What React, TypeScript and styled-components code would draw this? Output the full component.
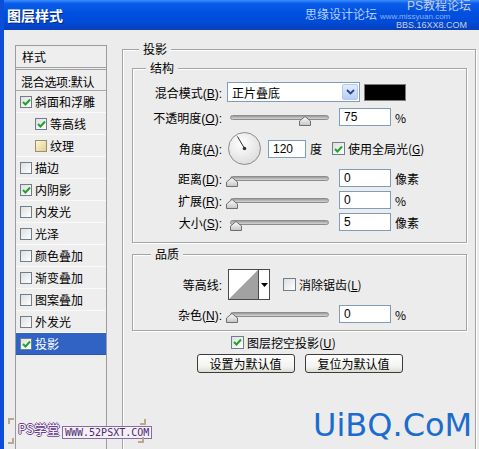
import styled, { createGlobalStyle } from "styled-components"

const GlobalStyle = createGlobalStyle`
  body {
    margin: 0;
    background: #ececec;
    font-family: "Liberation Sans", "Noto Sans CJK SC", sans-serif;
    font-size: 12px;
    color: #000;
  }
  * { box-sizing: border-box; }
`

const Window = styled.div`
  position: relative;
  width: 479px;
  height: 449px;
  overflow: hidden;
  background: #ececec;
  border-left: 4px solid #0b4ed8;
`

const TitleBar = styled.div`
  position: relative;
  height: 30px;
  display: flex;
  align-items: center;
  padding-left: 3px;
  background: linear-gradient(#3b8cff 0%, #0a5ce8 12%, #0050e0 45%, #0049d4 80%, #0a3fb8 100%);
`

const Title = styled.span`
  color: #fff;
  font-family: "Noto Sans CJK SC", sans-serif;
  font-weight: 700;
  font-size: 14px;
  text-shadow: 1px 1px 0 #0a2a80;
`

const Mark = styled.span<{ $x: number; $y: number; $size: number; $color: string }>`
  position: absolute;
  left: ${p => p.$x}px;
  top: ${p => p.$y}px;
  font-size: ${p => p.$size}px;
  color: ${p => p.$color};
  line-height: 1;
  white-space: nowrap;
`

const Body = styled.div`
  display: flex;
  align-items: flex-start;
  gap: 15px;
  padding: 15px 0 0 11px;
`

const StylePanel = styled.div`
  width: 92px;
  height: 420px;
  border: 1px solid #9c9c9c;
  background: #eeeeee;
`

const PanelHead = styled.div`
  height: 24px;
  padding: 2px 0 0 6px;
  border-bottom: 3px double #a0a0a0;
`

const BlendRow = styled.div`
  height: 21px;
  padding: 3px 0 0 5px;
  border-bottom: 1px solid #a8a8a8;
  white-space: nowrap;
  letter-spacing: -0.3px;
`

const ListRow = styled.div<{ $indent?: boolean; $selected?: boolean }>`
  height: 22px;
  display: flex;
  align-items: center;
  gap: 3px;
  padding-left: ${p => (p.$indent ? 19 : 4)}px;
  border-bottom: 1px solid ${p => (p.$selected ? "#2a58b0" : "#fafafa")};
  background: ${p => (p.$selected ? "#3163c4" : "transparent")};
  color: ${p => (p.$selected ? "#fff" : "#000")};
  font-family: "Noto Sans CJK SC", sans-serif;
`

const Box = styled.span<{ $size: number; $texture?: boolean }>`
  display: inline-flex;
  align-items: center;
  justify-content: center;
  width: ${p => p.$size}px;
  height: ${p => p.$size}px;
  flex: none;
  border: 1px solid ${p => (p.$texture ? "#9a9070" : "#6e7e8c")};
  background: ${p =>
    p.$texture
      ? "linear-gradient(135deg, #fff6d8, #e6cf8c)"
      : "linear-gradient(135deg, #dedede, #ffffff)"};
`

const Group = styled.div<{ $gap?: number }>`
  position: relative;
  border: 1px solid #a4a4a4;
  box-shadow: inset 1px 1px 0 #fff, 1px 1px 0 #fff;
  margin-top: ${p => p.$gap ?? 0}px;
`

const Legend = styled.span<{ $left: number }>`
  position: absolute;
  top: -9px;
  left: ${p => p.$left}px;
  padding: 0 4px;
  background: #ececec;
  font-family: "Noto Sans CJK SC", sans-serif;
  line-height: 16px;
`

const Outer = styled(Group)`
  width: 354px;
  height: 420px;
  margin-top: 4px;
  padding: 18px 8px 0 9px;
`

const Section = styled(Group)<{ $pad: string }>`
  display: flex;
  flex-direction: column;
  gap: 4px;
  padding: ${p => p.$pad};
`

const Row = styled.div<{ $h: number; $mt?: number; $ml?: number }>`
  display: flex;
  align-items: center;
  height: ${p => p.$h}px;
  margin-top: ${p => p.$mt ?? 0}px;
  margin-left: ${p => p.$ml ?? 0}px;
  white-space: nowrap;
`

const Label = styled.span`
  width: 90px;
  padding-right: 1px;
  text-align: right;
  margin-right: 4px;
  flex: none;
`

const Select = styled.div`
  width: 133px;
  height: 20px;
  display: flex;
  align-items: center;
  justify-content: space-between;
  border: 1px solid #7f9db9;
  background: #fff;
  padding: 1px 1px 1px 4px;
`

const DropButton = styled.span`
  width: 16px;
  height: 16px;
  display: flex;
  align-items: center;
  justify-content: center;
  border: 1px solid #b4c8ee;
  border-radius: 2px;
  background: linear-gradient(#e4ecfd, #b9cdf6);
`

const Swatch = styled.span`
  width: 42px;
  height: 17px;
  margin-left: 4px;
  background: #000;
  border: 1px solid #7a7a7a;
`

const SliderWrap = styled.div`
  position: relative;
  width: 104px;
  height: 18px;
  padding: 0 2px 0 3px;
  display: flex;
  align-items: center;
`

const Track = styled.div`
  width: 100%;
  height: 5px;
  border-radius: 3px;
  border: 1px solid #8c8c8c;
  background: linear-gradient(#9a9a9a, #d6d6d6);
`

const Thumb = styled.svg`
  position: absolute;
  top: 8px;
`

const Field = styled.div<{ $w: number; $ml: number }>`
  width: ${p => p.$w}px;
  height: 18px;
  margin-left: ${p => p.$ml}px;
  border: 1px solid #7f9db9;
  background: #fff;
  padding: 1px 0 0 4px;
  line-height: 15px;
`

const Unit = styled.span`
  margin-left: 4px;
  font-family: "Noto Sans CJK SC", sans-serif;
`

const Dial = styled.svg`
  margin-left: 1px;
  flex: none;
`

const Contour = styled.div`
  display: flex;
  height: 31px;
  margin-left: 1px;
  border: 1px solid #4a4a4a;
  background: #fff;
`

const ContourArrow = styled.span`
  width: 11px;
  display: flex;
  align-items: center;
  justify-content: center;
  border-left: 1px solid #4a4a4a;
`

const CheckText = styled.span`
  margin-left: 3px;
  font-family: "Noto Sans CJK SC", sans-serif;
`

const ButtonRow = styled.div`
  display: flex;
  justify-content: center;
  gap: 10px;
  margin-top: 3px;
`

const Button = styled.button`
  width: 98px;
  height: 19px;
  padding: 0;
  border: 1px solid #3c3c3c;
  border-radius: 3px;
  background: linear-gradient(#ffffff, #f2f2ee 70%, #dcdcd4);
  font-family: "Noto Sans CJK SC", sans-serif;
  font-size: 12px;
  line-height: 16px;
  color: #000;
`

const Bracket = styled.span<{ $x: number; $y: number; $flip?: boolean }>`
  position: absolute;
  left: ${p => p.$x}px;
  top: ${p => p.$y}px;
  width: 6px;
  height: 6px;
  border: 2px solid #b8a890;
  border-right: none;
  border-bottom: none;
  transform: ${p => (p.$flip ? "rotate(180deg)" : "none")};
`

const PsMark = styled.span`
  position: absolute;
  left: 14px;
  top: 422px;
  font-family: "Noto Sans CJK SC", sans-serif;
  font-size: 13px;
  line-height: 1;
  color: #fff;
  text-shadow: 1px 0 0 #6b3f8e, -1px 0 0 #6b3f8e, 0 1px 0 #6b3f8e, 0 -1px 0 #6b3f8e;
`

const SiteMark = styled.span`
  position: absolute;
  left: 58px;
  top: 426px;
  padding: 0 2px;
  font-family: "DejaVu Sans Mono", monospace;
  font-size: 10px;
  line-height: 11px;
  color: #4a2a6a;
  background: #f4f0f8;
  border: 1px solid #8a6aa0;
`

const BigMark = styled.span`
  position: absolute;
  left: 309px;
  top: 409px;
  font-family: "DejaVu Sans", sans-serif;
  font-size: 32px;
  line-height: 32px;
  color: #1c6cd0;
`

function Check({ checked, texture, size = 12 }: { checked?: boolean; texture?: boolean; size?: number }) {
  return (
    <Box $size={size} $texture={texture}>
      {checked && (
        <svg width="9" height="8" viewBox="0 0 9 8">
          <path d="M1 4 L3.5 6.5 L8 1.5" stroke="#22a32a" strokeWidth="2" fill="none" />
        </svg>
      )}
    </Box>
  )
}

function Slider({ pos }: { pos: number }) {
  return (
    <SliderWrap>
      <Track />
      <Thumb width="12" height="10" viewBox="0 0 12 10" style={{ left: pos - 6 }}>
        <defs>
          <linearGradient id="thumbFill" x1="0" y1="0" x2="0" y2="1">
            <stop offset="0" stopColor="#ffffff" />
            <stop offset="1" stopColor="#c4c4c4" />
          </linearGradient>
        </defs>
        <polygon points="6,0.5 11.5,5 11.5,9.5 0.5,9.5 0.5,5" fill="url(#thumbFill)" stroke="#6e6e6e" />
      </Thumb>
    </SliderWrap>
  )
}

const styles: { name: string; checked?: boolean; indent?: boolean; texture?: boolean; selected?: boolean }[] = [
  { name: "斜面和浮雕", checked: true },
  { name: "等高线", checked: true, indent: true },
  { name: "纹理", indent: true, texture: true },
  { name: "描边" },
  { name: "内阴影", checked: true },
  { name: "内发光" },
  { name: "光泽" },
  { name: "颜色叠加" },
  { name: "渐变叠加" },
  { name: "图案叠加" },
  { name: "外发光" },
  { name: "投影", checked: true, selected: true },
]

export default function App() {
  return (
    <>
      <GlobalStyle />
      <Window>
        <TitleBar>
          <Title>图层样式</Title>
          <Mark $x={301} $y={9} $size={12} $color="#b4d0ff">思缘设计论坛</Mark>
          <Mark $x={376} $y={13} $size={8} $color="#8fb0f0">www.missyuan.com</Mark>
          <Mark $x={403} $y={0} $size={12} $color="#c4cee6">PS教程论坛</Mark>
          <Mark $x={392} $y={21} $size={9} $color="#c6cedc">BBS.16XX8.COM</Mark>
        </TitleBar>

        <Body>
          <StylePanel>
            <PanelHead>样式</PanelHead>
            <BlendRow>混合选项:默认</BlendRow>
            {styles.map(s => (
              <ListRow key={s.name} $indent={s.indent} $selected={s.selected}>
                <Check checked={s.checked} texture={s.texture} />
                {s.name}
              </ListRow>
            ))}
          </StylePanel>

          <Outer>
            <Legend $left={16}>投影</Legend>
            <Section $pad="13px 0 11px 0">
              <Legend $left={13}>结构</Legend>
              <Row $h={20}>
                <Label>混合模式(<u>B</u>):</Label>
                <Select>
                  <span>正片叠底</span>
                  <DropButton>
                    <svg width="9" height="6" viewBox="0 0 9 6">
                      <path d="M1 1 L4.5 4.5 L8 1" stroke="#2a4a8a" strokeWidth="1.8" fill="none" />
                    </svg>
                  </DropButton>
                </Select>
                <Swatch />
              </Row>
              <Row $h={22}>
                <Label>不透明度(<u>O</u>):</Label>
                <Slider pos={78} />
                <Field $w={52} $ml={8}>75</Field>
                <Unit>%</Unit>
              </Row>
              <Row $h={33}>
                <Label>角度(<u>A</u>):</Label>
                <Dial width="33" height="33" viewBox="0 0 33 33">
                  <defs>
                    <radialGradient id="dialFill" cx="0.4" cy="0.35" r="0.7">
                      <stop offset="0" stopColor="#ffffff" />
                      <stop offset="1" stopColor="#dcdcdc" />
                    </radialGradient>
                  </defs>
                  <circle cx="16.5" cy="16.5" r="16" fill="url(#dialFill)" stroke="#8a8a8a" />
                  <line x1="16.5" y1="16.5" x2="9.5" y2="4.5" stroke="#333" strokeWidth="1" />
                  <circle cx="16.5" cy="16.5" r="1.8" fill="#333" />
                </Dial>
                <Field $w={38} $ml={7}>120</Field>
                <Unit>度</Unit>
                <Row $h={18} $ml={10}>
                  <Check checked size={13} />
                  <CheckText>使用全局光(<u>G</u>)</CheckText>
                </Row>
              </Row>
              <Row $h={18}>
                <Label>距离(<u>D</u>):</Label>
                <Slider pos={5} />
                <Field $w={52} $ml={8}>0</Field>
                <Unit>像素</Unit>
              </Row>
              <Row $h={18}>
                <Label>扩展(<u>R</u>):</Label>
                <Slider pos={5} />
                <Field $w={52} $ml={8}>0</Field>
                <Unit>%</Unit>
              </Row>
              <Row $h={18}>
                <Label>大小(<u>S</u>):</Label>
                <Slider pos={9} />
                <Field $w={52} $ml={8}>5</Field>
                <Unit>像素</Unit>
              </Row>
            </Section>

            <Section $pad="14px 0 7px 0" $gap={11}>
              <Legend $left={18}>品质</Legend>
              <Row $h={31}>
                <Label>等高线:</Label>
                <Contour>
                  <svg width="29" height="29" viewBox="0 0 29 29">
                    <polygon points="0,29 29,0 29,29" fill="#a2a2a2" />
                  </svg>
                  <ContourArrow>
                    <svg width="7" height="4" viewBox="0 0 7 4">
                      <polygon points="0,0 7,0 3.5,4" fill="#000" />
                    </svg>
                  </ContourArrow>
                </Contour>
                <Row $h={18} $ml={13}>
                  <Check size={13} />
                  <CheckText>消除锯齿(<u>L</u>)</CheckText>
                </Row>
              </Row>
              <Row $h={18} $mt={1}>
                <Label>杂色(<u>N</u>):</Label>
                <Slider pos={5} />
                <Field $w={52} $ml={8}>0</Field>
                <Unit>%</Unit>
              </Row>
            </Section>

            <Row $h={18} $mt={2} $ml={99}>
              <Check checked size={13} />
              <CheckText>图层挖空投影(<u>U</u>)</CheckText>
            </Row>
            <ButtonRow>
              <Button>设置为默认值</Button>
              <Button>复位为默认值</Button>
            </ButtonRow>
          </Outer>
        </Body>

        <Bracket $x={4} $y={418} />
        <Bracket $x={4} $y={438} $flip />
        <PsMark>PS学堂</PsMark>
        <SiteMark>WWW.52PSXT.COM</SiteMark>
        <Bracket $x={136} $y={419} $flip />
        <Bracket $x={134} $y={437} $flip />
        <BigMark>UiBQ.CoM</BigMark>
      </Window>
    </>
  )
}
